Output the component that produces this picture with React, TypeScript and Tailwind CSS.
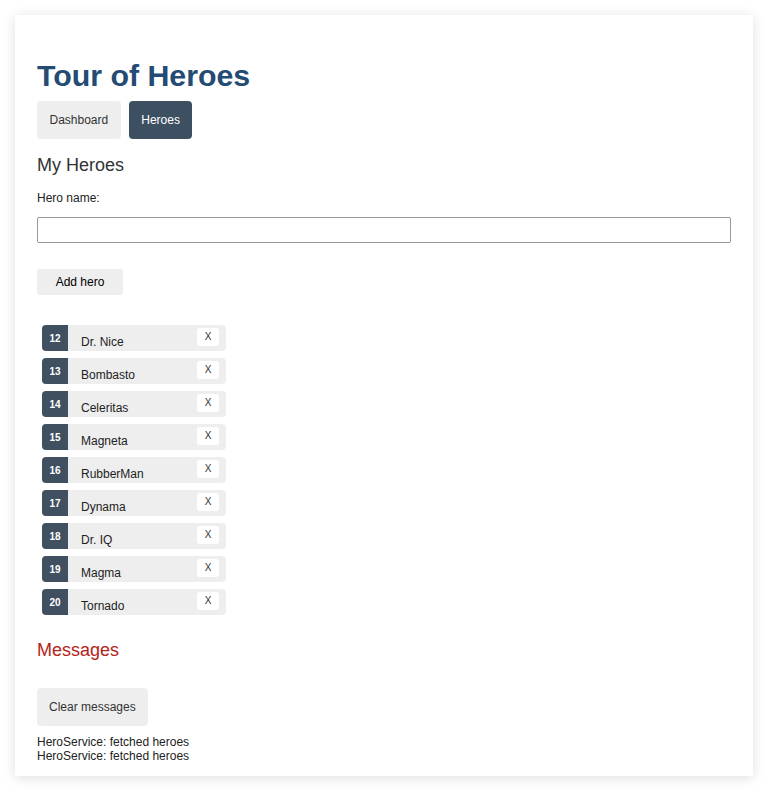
import React from "react";

const heroes = [
  { id: 12, name: "Dr. Nice" },
  { id: 13, name: "Bombasto" },
  { id: 14, name: "Celeritas" },
  { id: 15, name: "Magneta" },
  { id: 16, name: "RubberMan" },
  { id: 17, name: "Dynama" },
  { id: 18, name: "Dr. IQ" },
  { id: 19, name: "Magma" },
  { id: 20, name: "Tornado" },
];

export default function App() {
  return (
    <div className="min-h-screen bg-white p-[15px] font-['Liberation_Sans',Arial,sans-serif] text-[#333]">
      <div className="bg-white w-[738px] h-[761px] pt-[44px] px-[22px] shadow-[0_2px_12px_rgba(0,0,0,0.13)]">
        <h1 className="text-[30.3px] leading-[34px] font-bold text-[#234b73]">Tour of Heroes</h1>
        <nav className="mt-[8px] flex gap-[8px]">
          <button className="h-[38px] px-[12.5px] rounded-[4px] bg-[#eee] text-[12px] text-[#333]">Dashboard</button>
          <button className="h-[38px] px-[12.5px] rounded-[4px] bg-[#3d5061] text-[12px] text-white">Heroes</button>
        </nav>
        <h2 className="mt-[15px] text-[18px] leading-[22px] text-[#333]">My Heroes</h2>
        <div className="mt-[15px] text-[12px] leading-[14px] text-[#222]">Hero name:</div>
        <input className="mt-[12px] block h-[26px] w-full border border-[#999] rounded-[2px] bg-white" />
        <button className="mt-[26px] h-[26px] w-[86px] rounded-[3px] bg-[#eee] text-[12px] text-black">Add hero</button>
        <ul className="mt-[30px] ml-[5px] flex flex-col gap-[7px]">
          {heroes.map((h) => (
            <li key={h.id} className="flex items-start h-[26px] w-[184px] rounded-[4px] bg-[#eee]">
              <span className="h-[26px] w-[26px] rounded-l-[4px] bg-[#405061] text-white text-[10px] font-bold leading-[12px] pt-[8px] text-center">
                {h.id}
              </span>
              <span className="ml-[13px] pt-[10px] text-[12px] leading-[14px] text-[#222]">{h.name}</span>
              <span className="ml-auto mr-[7px] mt-[3px] h-[18px] w-[22px] rounded-[3px] bg-white text-[10px] leading-[18px] text-center text-[#333]">
                X
              </span>
            </li>
          ))}
        </ul>
        <h2 className="mt-[24px] text-[18px] leading-[22px] text-[#b4241a]">Messages</h2>
        <button className="mt-[27px] h-[38px] px-[12px] rounded-[4px] bg-[#eee] text-[12px] text-[#333]">Clear messages</button>
        <div className="mt-[9px] text-[12px] leading-[14px] text-[#222]">
          <div>HeroService: fetched heroes</div>
          <div>HeroService: fetched heroes</div>
        </div>
      </div>
    </div>
  );
}
